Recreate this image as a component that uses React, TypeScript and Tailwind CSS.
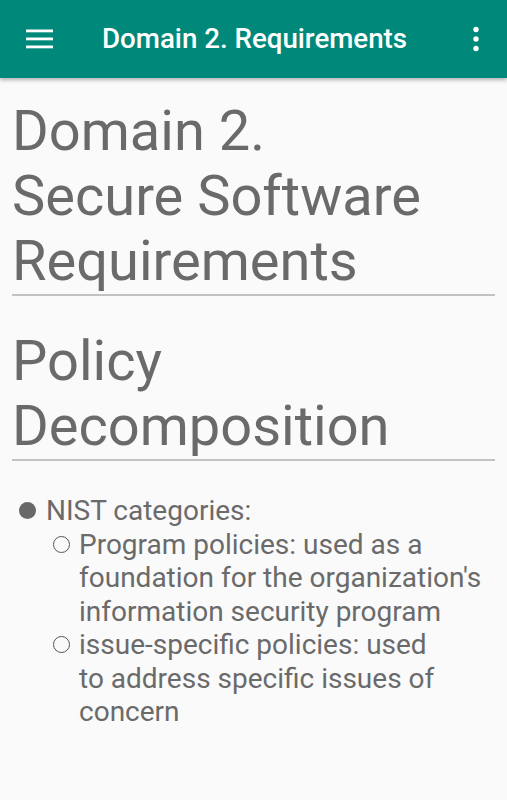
import React from "react";

const font = { fontFamily: "Roboto, 'Noto Sans', sans-serif" };

function Bullet({ filled }: { filled?: boolean }) {
  return filled ? (
    <span className="inline-block w-[17px] h-[17px] rounded-full bg-[#686868]" />
  ) : (
    <span className="inline-block w-[17px] h-[17px] rounded-full border-[1.5px] border-[#555]" />
  );
}

export default function App() {
  return (
    <div className="min-h-screen bg-[#fafafa]" style={font}>
      {/* Toolbar */}
      <header className="h-[78px] bg-[#00897b] flex items-center shadow-[0_2px_4px_rgba(0,0,0,0.3)] relative z-10">
        <div className="w-[80px] flex justify-center">
          <svg width="28" height="22" viewBox="0 0 28 22" className="ml-[-1px]">
            <rect x="0" y="1.5" width="27" height="2.8" fill="#fff" />
            <rect x="0" y="9.5" width="27" height="2.8" fill="#fff" />
            <rect x="0" y="17.5" width="27" height="2.8" fill="#fff" />
          </svg>
        </div>
        <div className="flex-1 pl-[22px] pb-[1px] text-white text-[27.7px] font-medium">
          Domain 2. Requirements
        </div>
        <div className="w-[62px] flex justify-center">
          <svg width="6" height="26" viewBox="0 0 6 26">
            <circle cx="3" cy="3.5" r="2.7" fill="#fff" />
            <circle cx="3" cy="13" r="2.7" fill="#fff" />
            <circle cx="3" cy="22.5" r="2.7" fill="#fff" />
          </svg>
        </div>
      </header>

      <main className="px-[12px] pt-[21px] text-[#6a6a6a]">
        <h1 className="text-[56px] leading-[65px] font-normal">
          Domain 2.
          <br />
          Secure Software Requirements
        </h1>
        <div className="h-[2px] bg-[#c2c2c2]" />

        <h2 className="mt-[33px] text-[56px] leading-[65px] font-normal">
          Policy Decomposition
        </h2>
        <div className="h-[2px] bg-[#c2c2c2]" />

        <ul className="mt-[33px] text-[28px] leading-[33.5px] pl-[7px]">
          <li>
            <div className="flex">
              <div className="h-[33.5px] w-[27px] flex items-center">
                <Bullet filled />
              </div>
              <span>NIST categories:</span>
            </div>
            <ul className="pl-[34px]">
              <li className="flex">
                <div className="h-[33.5px] w-[26px] shrink-0 flex items-center">
                  <Bullet />
                </div>
                <span>
                  Program policies: used as a foundation for the organization's
                  information security program
                </span>
              </li>
              <li className="flex">
                <div className="h-[33.5px] w-[26px] shrink-0 flex items-center">
                  <Bullet />
                </div>
                <span className="pr-[45px]">
                  issue-specific policies: used to address specific issues of
                  concern
                </span>
              </li>
            </ul>
          </li>
        </ul>
      </main>
    </div>
  );
}
